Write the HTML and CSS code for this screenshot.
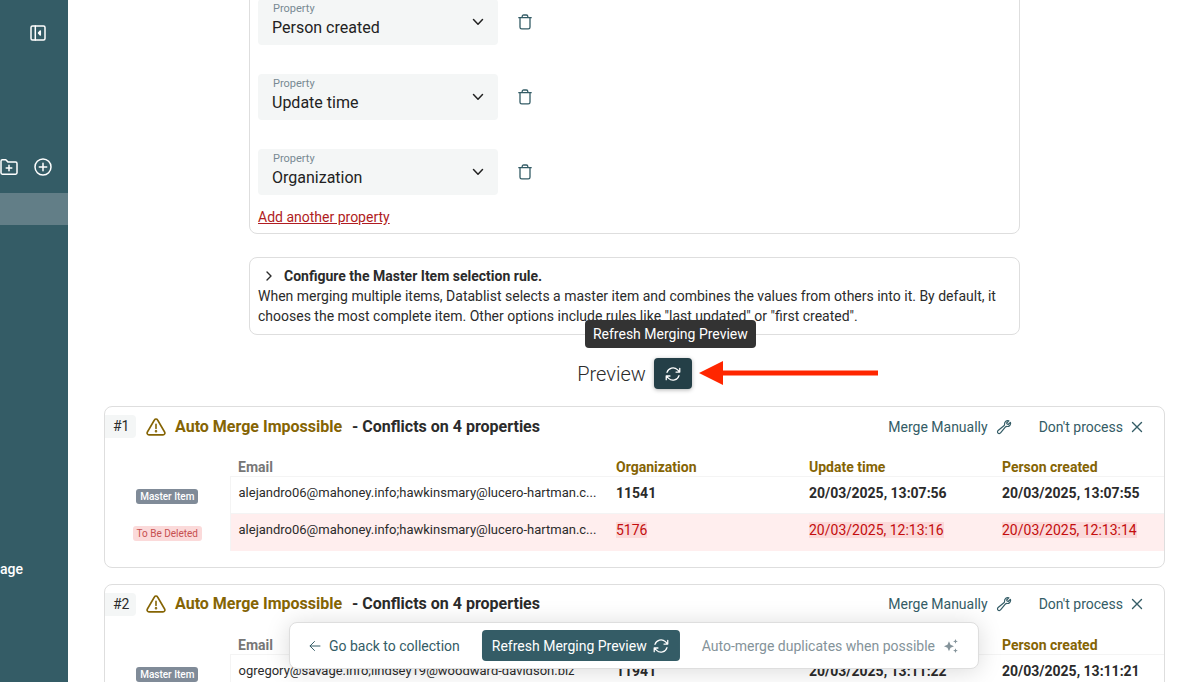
FILE: index.html
```html
<!DOCTYPE html>
<html lang="en">
<head>
  <meta charset="UTF-8">
  <meta name="viewport" content="width=device-width, initial-scale=1.0">
  <title>Datablist - Duplicates</title>
  <link rel="stylesheet" href="styles.css">
</head>
<body>
  <!-- shared icons -->
  <svg class="sprite" aria-hidden="true">
    <symbol id="chevron-down" viewBox="0 0 12 12"><path d="M1.5 3.5 6 8.2l4.500-4.700"/></symbol>
    <symbol id="trash" viewBox="0 0 14 16"><path d="M.8 3.700h12.400M4.200 3.500V2.500c0-.9.6-1.500 1.500-1.500h2.600c.9 0 1.500.6 1.500 1.500v1M2 3.900v9.300c0 1 .7 1.700 1.700 1.700h6.600c1 0 1.700-.7 1.700-1.700V3.900"/></symbol>
    <symbol id="refresh" viewBox="0 0 24 24"><path d="M16.020 9.350h5V4.350M2.980 19.640v-4.990h4.990M2.980 14.650l3.180 3.180a8.250 8.250 0 0 0 13.800-3.700M4.030 9.860a8.250 8.250 0 0 1 13.810-3.700l3.180 3.190"/></symbol>
    <symbol id="warning" viewBox="0 0 20 18"><path d="M8.400 2 1.400 14c-.8 1.400.1 2.900 1.600 2.900h14c1.500 0 2.400-1.500 1.600-2.900l-7-12c-.7-1.300-2.500-1.300-3.200 0ZM10 6.300v4.200"/><circle cx="10" cy="13.300" r=".5"/></symbol>
    <symbol id="wrench" viewBox="0 0 24 24"><path d="M21.750 6.750a4.500 4.500 0 0 1-4.880 4.480c-1.080-.09-2.240.18-2.930 1.020l-7.150 8.690a2.550 2.550 0 1 1-3.590-3.590l8.690-7.150c.84-.69 1.110-1.850 1.020-2.930a4.500 4.500 0 0 1 6.340-4.490l-3.280 3.280a3 3 0 0 0 2.250 2.250l3.280-3.280c.26.57.4 1.200.4 1.720Z"/></symbol>
    <symbol id="close" viewBox="0 0 12 12"><path d="m1.500 1.500 9 9m0-9-9 9"/></symbol>
  </svg>

  <div class="app">
    <aside class="sidebar">
      <button class="icon-btn collapse" aria-label="Collapse sidebar">
        <svg width="16" height="16" viewBox="0 0 16 16"><rect x="1" y="1" width="14" height="14" rx="1.500"/><path d="M5.300 1v14M10.300 6 8.500 8l1.800 2z"/></svg>
      </button>
      <div class="sidebar-actions">
        <button class="icon-btn" aria-label="New folder">
          <svg width="18" height="18" viewBox="0 0 18 18"><path d="M1 14.800V3.200C1 2.400 1.600 1.800 2.400 1.800h3.400l2.300 2.300h7.500c.8 0 1.400.6 1.400 1.400v9.300c0 .8-.6 1.400-1.400 1.400H2.400c-.8 0-1.400-.6-1.400-1.400ZM9 7.200v5.600M6.200 10h5.600"/></svg>
        </button>
        <button class="icon-btn" aria-label="New collection">
          <svg width="18" height="18" viewBox="0 0 18 18"><circle cx="9" cy="9" r="8"/><path d="M9 5.300v7.400M5.300 9h7.400"/></svg>
        </button>
      </div>
      <div class="sidebar-current"></div>
      <a href="#" class="sidebar-link">age</a>
    </aside>

    <main class="content">
      <section class="panel properties">
        <div class="property-row">
          <div class="field">
            <label for="property1">Property</label>
            <select id="property1"><option>Person created</option></select>
            <svg class="chevron" width="12" height="12"><use href="#chevron-down"/></svg>
          </div>
          <button class="icon-btn" aria-label="Remove"><svg width="14" height="16"><use href="#trash"/></svg></button>
        </div>
        <div class="property-row">
          <div class="field">
            <label for="property2">Property</label>
            <select id="property2"><option>Update time</option></select>
            <svg class="chevron" width="12" height="12"><use href="#chevron-down"/></svg>
          </div>
          <button class="icon-btn" aria-label="Remove"><svg width="14" height="16"><use href="#trash"/></svg></button>
        </div>
        <div class="property-row">
          <div class="field">
            <label for="property3">Property</label>
            <select id="property3"><option>Organization</option></select>
            <svg class="chevron" width="12" height="12"><use href="#chevron-down"/></svg>
          </div>
          <button class="icon-btn" aria-label="Remove"><svg width="14" height="16"><use href="#trash"/></svg></button>
        </div>
        <a href="#" class="add-link">Add another property</a>
      </section>

      <section class="panel master-rule">
        <button class="rule-toggle" aria-expanded="false">
          <svg width="10" height="10" viewBox="0 0 10 10"><path d="m3 1 4 4-4 4"/></svg>
          Configure the Master Item selection rule.
        </button>
        <p>When merging multiple items, Datablist selects a master item and combines the values from others into it. By default, it chooses the most complete item. Other options include rules like "last updated" or "first created".</p>
      </section>

      <div class="preview">
        <h2>Preview</h2>
        <button class="refresh-btn" aria-label="Refresh" aria-describedby="refresh-tip">
          <svg width="18" height="18"><use href="#refresh"/></svg>
        </button>
        <span class="tooltip" id="refresh-tip" role="tooltip">Refresh Merging Preview</span>
        <svg class="arrow" width="180" height="24" viewBox="0 0 180 24"><path d="M0 12 24 0v9.500h155v5H24V24z"/></svg>
      </div>

      <section class="group">
        <header class="group-header">
          <span class="number">#1</span>
          <svg class="warning" width="20" height="18"><use href="#warning"/></svg>
          <h3><span>Auto Merge Impossible</span> - Conflicts on 4 properties</h3>
          <button class="action">Merge Manually <svg width="16" height="16"><use href="#wrench"/></svg></button>
          <button class="action">Don't process <svg width="12" height="12"><use href="#close"/></svg></button>
        </header>
        <table>
          <colgroup><col class="col-status"><col class="col-email"><col class="col-value"><col class="col-value"><col></colgroup>
          <thead>
            <tr><td></td><th class="plain">Email</th><th>Organization</th><th>Update time</th><th>Person created</th></tr>
          </thead>
          <tbody>
            <tr class="master">
              <td class="status"><span class="tag">Master Item</span></td>
              <td class="email">alejandro06@mahoney.info;hawkinsmary@lucero-hartman.c...</td>
              <td>11541</td>
              <td>20/03/2025, 13:07:56</td>
              <td>20/03/2025, 13:07:55</td>
            </tr>
            <tr class="deleted">
              <td class="status"><span class="tag">To Be Deleted</span></td>
              <td class="email">alejandro06@mahoney.info;hawkinsmary@lucero-hartman.c...</td>
              <td><del>5176</del></td>
              <td><del>20/03/2025, 12:13:16</del></td>
              <td><del>20/03/2025, 12:13:14</del></td>
            </tr>
          </tbody>
        </table>
      </section>

      <section class="group">
        <header class="group-header">
          <span class="number">#2</span>
          <svg class="warning" width="20" height="18"><use href="#warning"/></svg>
          <h3><span>Auto Merge Impossible</span> - Conflicts on 4 properties</h3>
          <button class="action">Merge Manually <svg width="16" height="16"><use href="#wrench"/></svg></button>
          <button class="action">Don't process <svg width="12" height="12"><use href="#close"/></svg></button>
        </header>
        <table>
          <colgroup><col class="col-status"><col class="col-email"><col class="col-value"><col class="col-value"><col></colgroup>
          <thead>
            <tr><td></td><th class="plain">Email</th><th>Organization</th><th>Update time</th><th>Person created</th></tr>
          </thead>
          <tbody>
            <tr class="master">
              <td class="status"><span class="tag">Master Item</span></td>
              <td class="email">ogregory@savage.info;lindsey19@woodward-davidson.biz</td>
              <td>11941</td>
              <td>20/03/2025, 13:11:22</td>
              <td>20/03/2025, 13:11:21</td>
            </tr>
          </tbody>
        </table>
      </section>

      <div class="toolbar">
        <button class="toolbar-btn">
          <svg width="12" height="12" viewBox="0 0 12 12"><path d="M11 6H1.200M5.500 1.500 1 6l4.500 4.500"/></svg>
          Go back to collection
        </button>
        <button class="toolbar-btn primary">Refresh Merging Preview <svg width="18" height="18"><use href="#refresh"/></svg></button>
        <button class="toolbar-btn muted" disabled>
          Auto-merge duplicates when possible
          <svg class="sparkles" width="16" height="16" viewBox="0 0 16 16"><path d="M6 3.200 7.500 6.700 11 8.200 7.500 9.700 6 13.200 4.500 9.700 1 8.200l3.500-1.500zM12.500 1l.7 1.700 1.700.7-1.700.7-.7 1.700-.7-1.700-1.700-.7 1.700-.7zM12.500 10.200l.7 1.700 1.700.7-1.700.7-.7 1.700-.7-1.700-1.700-.7 1.700-.7z"/></svg>
        </button>
      </div>
    </main>
  </div>
</body>
</html>
```
FILE: styles.css
```css
* {
  box-sizing: border-box;
}
body {
  margin: 0;
  font-family: Roboto, "Liberation Sans", sans-serif;
  font-size: 14px;
  line-height: 20px;
  color: #2b2b2b;
  background-color: #fff;
}
h2, h3, p {
  margin: 0;
}
button {
  font: inherit;
  color: inherit;
  background: none;
  border: none;
  padding: 0;
  cursor: pointer;
}
svg {
  fill: none;
  stroke: currentColor;
  stroke-linecap: round;
  stroke-linejoin: round;
  flex: none;
}
.sprite {
  display: none;
}
.app {
  display: flex;
  height: 100vh;
  overflow: hidden;
}

/* Sidebar */
.sidebar {
  flex: none;
  width: 68px;
  background-color: #345c66;
  color: #fff;
}
.icon-btn {
  display: flex;
}
.collapse {
  margin: 25px 0 0 30px;
}
.collapse svg, .sidebar-actions svg {
  stroke-width: 1.5;
}
.sidebar-actions {
  display: flex;
  gap: 16px;
  margin-top: 117px;
}
.sidebar-current {
  height: 32px;
  margin-top: 17px;
  background-color: #627e87;
}
.sidebar-link {
  display: block;
  margin-top: 334px;
  color: #fff;
  font-weight: 500;
  text-decoration: none;
}

/* Content */
.content {
  position: relative;
  flex: 1;
  min-width: 0;
  padding: 0 35px 0 36px;
}
.panel {
  max-width: 771px;
  margin: 0 auto 23px;
  padding: 8px;
  border: 1px solid #dedede;
  border-radius: 8px;
}
.properties {
  margin-top: -10px;
  padding-bottom: 6px;
}
.property-row {
  display: flex;
  align-items: center;
  gap: 20px;
  margin-bottom: 29px;
  color: #345c66;
}
.property-row:nth-of-type(3) {
  margin-bottom: 12px;
}
.property-row .icon-btn svg {
  stroke-width: 1.3;
}
.field {
  position: relative;
  width: 240px;
  height: 46px;
  padding-top: 3px;
  background-color: #f4f6f6;
  border-radius: 4px;
}
.field label {
  display: block;
  padding-left: 15px;
  font-size: 11px;
  line-height: 14px;
  color: #788a93;
}
.field select {
  display: block;
  width: 100%;
  height: 24px;
  padding: 0 36px 0 14px;
  border: none;
  appearance: none;
  background: none;
  font: inherit;
  font-size: 16px;
  color: #222;
}
.chevron {
  position: absolute;
  top: 17px;
  right: 14px;
  color: #222;
  stroke-width: 1.5;
  pointer-events: none;
}
.add-link {
  display: block;
  width: fit-content;
  color: #b01c22;
}
.rule-toggle {
  display: flex;
  align-items: center;
  gap: 10px;
  padding-left: 6px;
  font-weight: 700;
}
.rule-toggle svg {
  stroke-width: 1.4;
}

/* Preview title */
.preview {
  position: relative;
  display: flex;
  align-items: center;
  gap: 8px;
  width: fit-content;
  margin: 0 auto 17px;
}
.preview h2 {
  font-size: 20px;
  font-weight: 300;
}
.refresh-btn {
  display: flex;
  align-items: center;
  justify-content: center;
  width: 38px;
  height: 31px;
  border-radius: 4px;
  background-color: #243f47;
  color: #fff;
  box-shadow: 0 1px 4px rgba(0, 0, 0, 0.3);
}
.refresh-btn svg, .primary svg {
  stroke-width: 1.7;
}
.tooltip {
  position: absolute;
  right: -64px;
  bottom: calc(100% + 10px);
  padding: 4px 8px;
  border-radius: 4px;
  background-color: #333;
  color: #fff;
  white-space: nowrap;
}
.arrow {
  position: absolute;
  top: 3px;
  left: calc(100% + 7px);
  fill: #ff2600;
  stroke: none;
}

/* Duplicate groups */
.group {
  margin-bottom: 16px;
  padding: 8px 0 16px;
  border: 1px solid #dedede;
  border-radius: 8px;
}
.group-header {
  display: flex;
  align-items: center;
  height: 23px;
  margin-bottom: 20px;
  padding-right: 21px;
}
.number {
  width: 31px;
  padding: 1px 0 2px 8px;
  border-radius: 0 4px 4px 0;
  background-color: #f4f6f6;
}
.warning {
  margin: 0 9px 0 10px;
  color: #856404;
  stroke-width: 1.6;
}
.group h3 {
  margin-right: auto;
  font-size: 16px;
  font-weight: 700;
}
.group h3 span {
  margin-right: 6px;
  color: #856404;
}
.action {
  display: flex;
  align-items: center;
  gap: 8px;
  margin-left: 27px;
  color: #345c66;
}
.action svg {
  stroke-width: 1.4;
}
.action svg[width="16"] {
  stroke-width: 1.8;
}
table {
  width: 100%;
  table-layout: fixed;
  border-collapse: collapse;
}
.col-status {
  width: 125px;
}
.col-email {
  width: 378px;
}
.col-value {
  width: 193px;
}
th, td {
  padding: 0 0 0 8px;
  text-align: left;
  white-space: nowrap;
}
th {
  line-height: 18px;
  color: #856404;
}
th.plain {
  color: #777;
}
tbody td {
  height: 37px;
  padding-bottom: 4px;
  border-top: 1px solid #f4f4f4;
}
.master td {
  font-weight: 700;
}
.deleted td {
  background-color: #ffeeee;
}
tbody .status {
  padding: 0;
  border: none;
  background: none;
  text-align: center;
}
tbody .email {
  border-left: 1px solid #f4f4f4;
  font-size: 13px;
  font-weight: 400;
}
.tag {
  display: inline-block;
  padding: 0 4px;
  border-radius: 3px;
  background-color: #808b98;
  color: #fff;
  font-size: 10px;
  font-weight: 500;
  line-height: 15px;
}
.deleted .tag {
  background-color: #fbdada;
  color: #c65050;
  font-weight: 400;
}
del {
  background-color: #fbdada;
  color: #c40d0d;
  text-decoration: none;
}

/* Floating toolbar */
.toolbar {
  position: absolute;
  left: 50%;
  bottom: 13px;
  display: flex;
  align-items: center;
  padding: 7px;
  border: 1px solid #dedede;
  border-radius: 8px;
  background-color: #fff;
  box-shadow: 0 2px 24px rgba(0, 0, 0, 0.15);
  transform: translateX(-50%);
}
.toolbar-btn {
  display: flex;
  align-items: center;
  gap: 8px;
  height: 31px;
  padding: 0 12px;
  color: #345c66;
  white-space: nowrap;
}
.toolbar-btn.primary {
  gap: 5px;
  margin: 0 10px;
  padding: 0 10px;
  border-radius: 4px;
  background-color: #345c66;
  color: #fff;
}
.toolbar-btn.muted {
  color: #84939a;
}
.sparkles {
  fill: currentColor;
  stroke: none;
}
```
